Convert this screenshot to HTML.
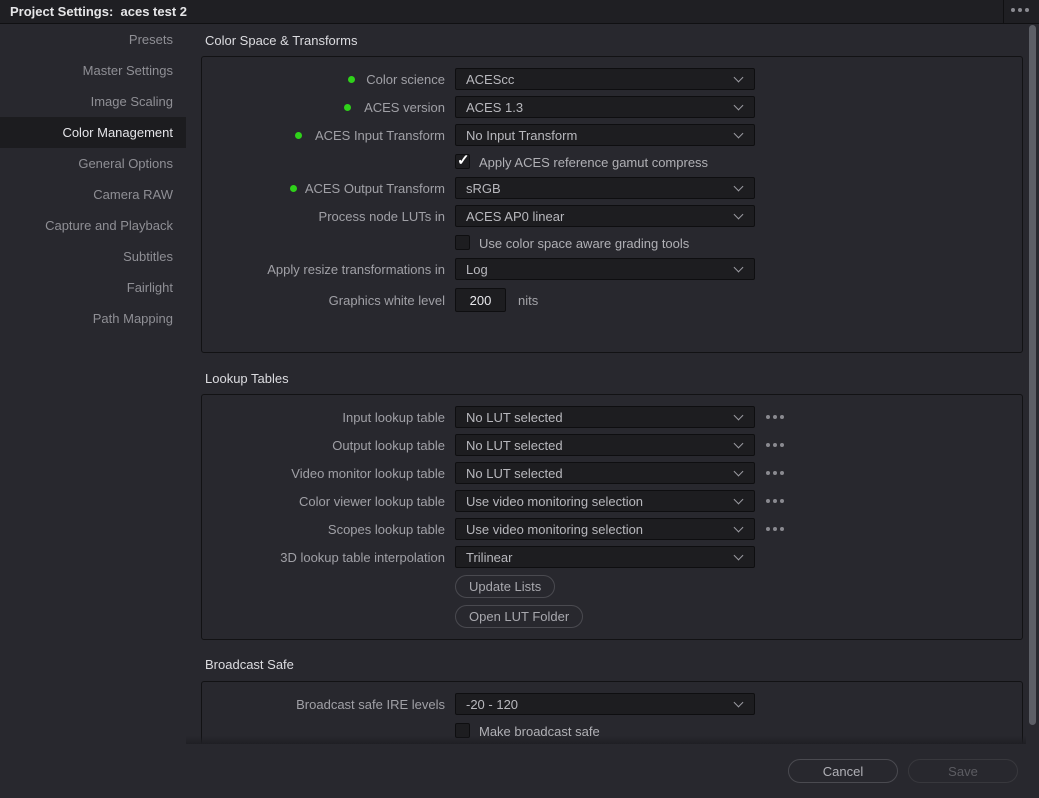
<!DOCTYPE html>
<html><head><style>
*{box-sizing:border-box;margin:0;padding:0}
body{width:1039px;height:798px;background:#28282e;font-family:"Liberation Sans",sans-serif;font-size:13px;color:#a3a3a8;position:relative;overflow:hidden}
.tb{position:absolute;left:0;top:0;width:1039px;height:24px;background:#1f1f23;border-bottom:1px solid #101012}
.tb .t{position:absolute;left:10px;top:4px;color:#e6e6e8;font-weight:bold;font-size:13px}
.tb .m{position:absolute;left:1003px;top:0;width:36px;height:23px;border-left:1px solid #101012}
.dots{position:absolute;display:flex;gap:3px}
.dots i{width:4px;height:4px;border-radius:50%;background:#8a8a90;display:block}
.side div{position:absolute;right:calc(1039px - 173px);color:#8f8f95;white-space:nowrap}
.sel{position:absolute;left:0;top:117px;width:186px;height:31px;background:#1c1c1f}
.h{position:absolute;left:205px;color:#dcdce0;font-size:13px}
.p{position:absolute;left:201px;width:822px;border:1px solid #121214;border-radius:3px;background:#28282e}
.l{position:absolute;right:594px;white-space:nowrap;color:#a0a0a6}
.d{position:absolute;left:455px;width:300px;height:22px;background:#1d1d20;border:1px solid #0e0e10;border-radius:2px;color:#b8b8bd;padding:3px 10px;white-space:nowrap}
.d:after{content:"";position:absolute;right:12px;top:5px;width:6px;height:6px;border-right:1.5px solid #9a9aa0;border-bottom:1.5px solid #9a9aa0;transform:rotate(45deg)}
.g{position:absolute;width:7px;height:7px;border-radius:50%;background:#2fd21a}
.cb{position:absolute;left:455px;width:15px;height:15px;background:#1d1d20;border:1px solid #0e0e10;border-radius:2px}
.ct{position:absolute;left:479px;color:#b0b0b5;white-space:nowrap}
.btn{position:absolute;left:455px;height:23px;border:1px solid #4a4a50;border-radius:12px;color:#a8a8ae;padding:3px 13px;white-space:nowrap}
</style></head><body>
<div class="tb"><div class="t">Project Settings:&nbsp; aces test 2</div><div class="m"></div></div>
<div class="dots" style="left:1011px;top:8px"><i></i><i></i><i></i></div>
<div class="sel"></div>
<div class="side">
<div style="top:32px">Presets</div>
<div style="top:63px">Master Settings</div>
<div style="top:94px">Image Scaling</div>
<div style="top:125px;color:#e4e4e8">Color Management</div>
<div style="top:156px">General Options</div>
<div style="top:187px">Camera RAW</div>
<div style="top:218px">Capture and Playback</div>
<div style="top:249px">Subtitles</div>
<div style="top:280px">Fairlight</div>
<div style="top:311px">Path Mapping</div>
</div>
<div style="position:absolute;left:1029px;top:25px;width:7px;height:700px;background:#5d5f66;border-radius:4px"></div>

<div class="h" style="top:33px">Color Space &amp; Transforms</div>
<div class="p" style="top:56px;height:297px"></div>
<div class="g" style="left:348px;top:76px"></div><div class="l" style="top:72px">Color science</div><div class="d" style="top:68px">ACEScc</div>
<div class="g" style="left:344px;top:104px"></div><div class="l" style="top:100px">ACES version</div><div class="d" style="top:96px">ACES 1.3</div>
<div class="g" style="left:295px;top:132px"></div><div class="l" style="top:128px">ACES Input Transform</div><div class="d" style="top:124px">No Input Transform</div>
<div class="cb" style="top:154px"></div><div style="position:absolute;left:457px;top:151px;color:#fff;font-size:15px;font-weight:bold">✓</div><div class="ct" style="top:155px">Apply ACES reference gamut compress</div>
<div class="g" style="left:290px;top:185px"></div><div class="l" style="top:181px">ACES Output Transform</div><div class="d" style="top:177px">sRGB</div>
<div class="l" style="top:209px">Process node LUTs in</div><div class="d" style="top:205px">ACES AP0 linear</div>
<div class="cb" style="top:235px"></div><div class="ct" style="top:236px">Use color space aware grading tools</div>
<div class="l" style="top:262px">Apply resize transformations in</div><div class="d" style="top:258px">Log</div>
<div class="l" style="top:293px">Graphics white level</div>
<div style="position:absolute;left:455px;top:288px;width:51px;height:24px;background:#1d1d20;border:1px solid #0e0e10;border-radius:2px;color:#e8e8ec;text-align:center;padding-top:4px">200</div>
<div style="position:absolute;left:518px;top:293px">nits</div>

<div class="h" style="top:371px">Lookup Tables</div>
<div class="p" style="top:394px;height:246px"></div>
<div class="l" style="top:410px">Input lookup table</div><div class="d" style="top:406px">No LUT selected</div><div class="dots" style="left:766px;top:415px"><i></i><i></i><i></i></div>
<div class="l" style="top:438px">Output lookup table</div><div class="d" style="top:434px">No LUT selected</div><div class="dots" style="left:766px;top:443px"><i></i><i></i><i></i></div>
<div class="l" style="top:466px">Video monitor lookup table</div><div class="d" style="top:462px">No LUT selected</div><div class="dots" style="left:766px;top:471px"><i></i><i></i><i></i></div>
<div class="l" style="top:494px">Color viewer lookup table</div><div class="d" style="top:490px">Use video monitoring selection</div><div class="dots" style="left:766px;top:499px"><i></i><i></i><i></i></div>
<div class="l" style="top:522px">Scopes lookup table</div><div class="d" style="top:518px">Use video monitoring selection</div><div class="dots" style="left:766px;top:527px"><i></i><i></i><i></i></div>
<div class="l" style="top:550px">3D lookup table interpolation</div><div class="d" style="top:546px">Trilinear</div>
<div class="btn" style="top:575px">Update Lists</div>
<div class="btn" style="top:605px">Open LUT Folder</div>

<div class="h" style="top:657px">Broadcast Safe</div>
<div class="p" style="top:681px;height:80px"></div>
<div class="l" style="top:697px">Broadcast safe IRE levels</div><div class="d" style="top:693px">-20 - 120</div>
<div class="cb" style="top:723px"></div><div class="ct" style="top:724px">Make broadcast safe</div>

<div style="position:absolute;left:0;top:744px;width:1039px;height:54px;background:#28282e"></div>
<div style="position:absolute;left:186px;top:736px;width:840px;height:8px;background:linear-gradient(#28282e00,#1f1f24)"></div>
<div style="position:absolute;left:788px;top:759px;width:110px;height:24px;border:1px solid #4a4a50;border-radius:12px;color:#b0b0b6;text-align:center;padding-top:4px">Cancel</div>
<div style="position:absolute;left:908px;top:759px;width:110px;height:24px;border:1px solid #38383d;border-radius:12px;color:#5c5c62;text-align:center;padding-top:4px">Save</div>
</body></html>
